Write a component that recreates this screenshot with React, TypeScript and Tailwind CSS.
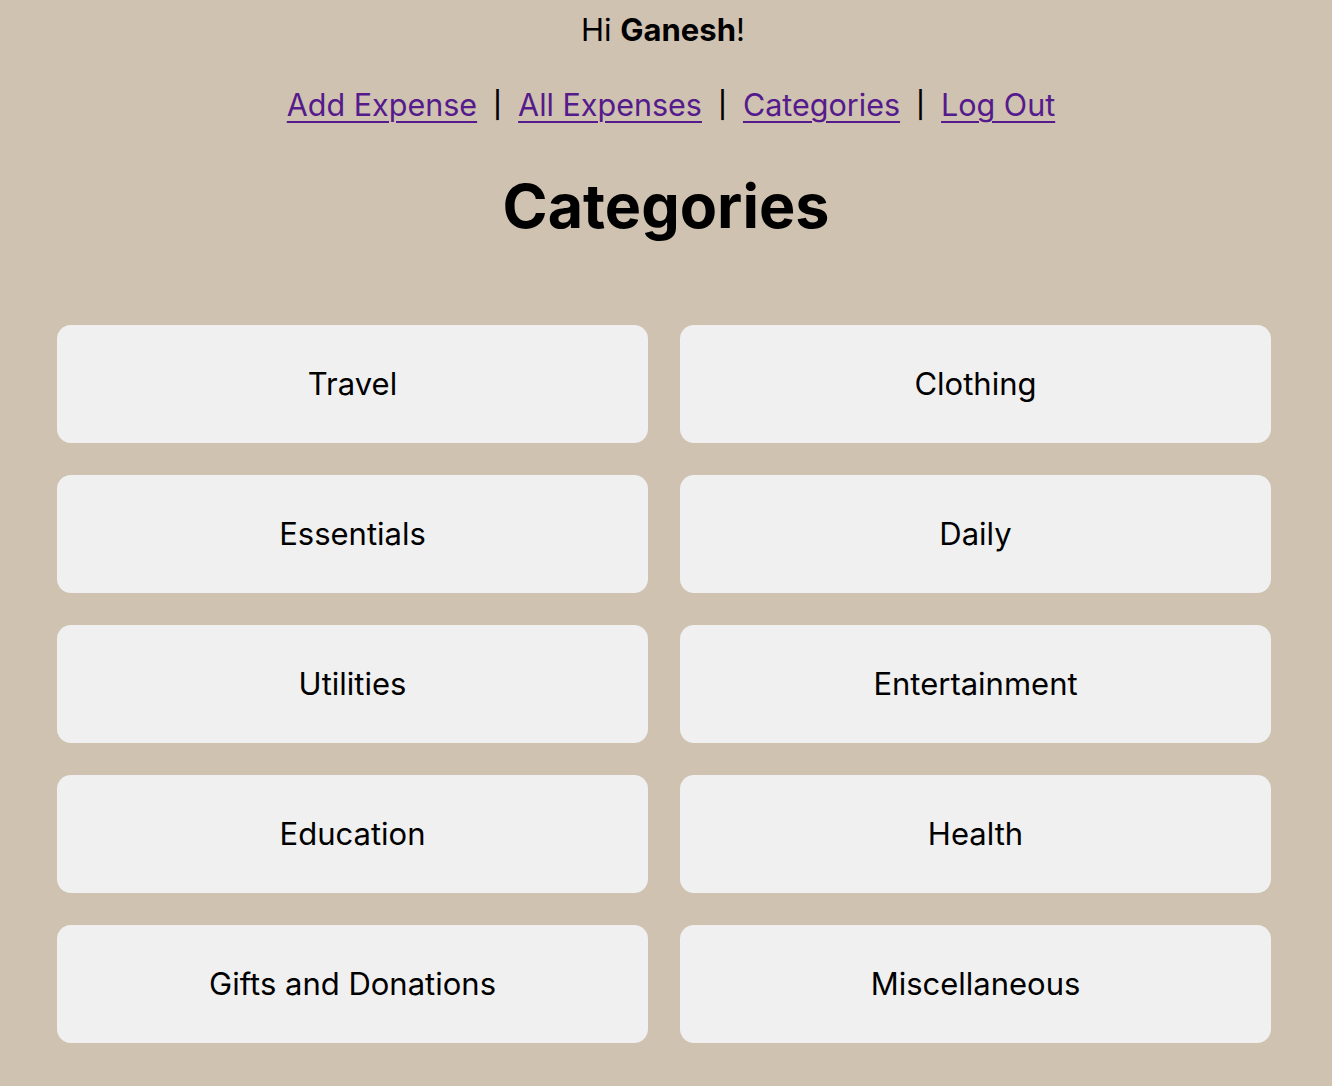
import React from 'react';

const categories = [
  'Travel',
  'Clothing',
  'Essentials',
  'Daily',
  'Utilities',
  'Entertainment',
  'Education',
  'Health',
  'Gifts and Donations',
  'Miscellaneous',
];

const links = ['Add Expense', 'All Expenses', 'Categories', 'Log Out'];

const App: React.FC = () => {
  return (
    <div className="min-h-screen bg-[#cfc2b1] text-black font-['Inter',sans-serif] pb-10">
      <p className="text-center text-[31px] leading-[34px] pt-[13px] pr-[6px]">
        Hi <span className="font-bold">Ganesh</span>!
      </p>

      <nav className="flex justify-center items-center mt-[39px] pl-[10px] text-[30.5px] leading-[38px]">
        {links.map((l, i) => (
          <React.Fragment key={l}>
            {i > 0 && <span className="mx-[16px] text-[26px] font-medium">|</span>}
            <a href="#" className="text-[#551a8b] underline underline-offset-[5px] decoration-2">
              {l}
            </a>
          </React.Fragment>
        ))}
      </nav>

      <h1 className="text-center font-bold text-[61px] leading-[74px] mt-[45px]">Categories</h1>

      <div className="grid grid-cols-[591px_591px] gap-8 pl-[57px] mt-[82px]">
        {categories.map((c) => (
          <div
            key={c}
            className="h-[118px] bg-[#f0f0f0] rounded-[14px] flex items-center justify-center text-[31px]"
          >
            {c}
          </div>
        ))}
      </div>
    </div>
  );
};

export default App;
